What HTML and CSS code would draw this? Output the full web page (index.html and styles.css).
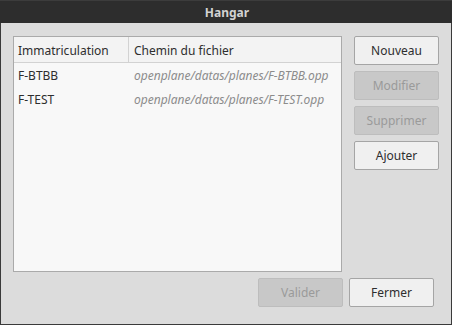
FILE: index.html
```html
<!DOCTYPE html>
<html lang="fr">
<head>
<meta charset="utf-8">
<title>Hangar</title>
<link rel="stylesheet" href="styles.css">
</head>
<body>
<div class="window">
  <div class="titlebar">Hangar</div>
  <div class="content">
    <div class="main">
      <div class="table">
        <div class="thead">
          <div class="th col1">Immatriculation</div>
          <div class="th col2">Chemin du fichier</div>
        </div>
        <div class="row">
          <div class="td col1">F-BTBB</div>
          <div class="td col2 path">openplane/datas/planes/F-BTBB.opp</div>
        </div>
        <div class="row">
          <div class="td col1">F-TEST</div>
          <div class="td col2 path">openplane/datas/planes/F-TEST.opp</div>
        </div>
      </div>
      <div class="side">
        <button class="btn">Nouveau</button>
        <button class="btn" disabled>Modifier</button>
        <button class="btn" disabled>Supprimer</button>
        <button class="btn">Ajouter</button>
      </div>
    </div>
    <div class="footer">
      <button class="btn" disabled>Valider</button>
      <button class="btn">Fermer</button>
    </div>
  </div>
</div>
</body>
</html>
```
FILE: styles.css
```css
* { box-sizing: border-box; }
html, body { margin: 0; padding: 0; }
body {
  font-family: "Noto Sans", "Open Sans", sans-serif;
  font-size: 12px;
  color: #2e2e2e;
  background: #dcdcdc;
}
.window {
  width: 452px;
  height: 325px;
  background: #dcdcdc;
  border: 1px solid #3a3a3a;
  border-top: none;
  display: flex;
  flex-direction: column;
}
.titlebar {
  height: 23px;
  background: #2d2d2d;
  border-top: 1px solid #3c3c3c;
  margin: 0 -1px;
  color: #d2d2d2;
  font-weight: bold;
  font-size: 12px;
  display: flex;
  align-items: center;
  justify-content: center;
  padding-top: 1px;
  padding-left: 2px;
}
.content {
  flex: 1;
  padding: 13px 12px 0 12px;
  display: flex;
  flex-direction: column;
}
.main {
  display: flex;
  gap: 12px;
}
.table {
  width: 329px;
  height: 236px;
  background: #f8f8f8;
  border: 1px solid #aaaaaa;
}
.thead {
  display: flex;
  height: 26px;
  background: #f3f3f3;
  border-bottom: 1px solid #d2d2d2;
}
.th {
  display: flex;
  align-items: center;
  padding-left: 4px;
  padding-top: 1px;
}
.thead .col1 {
  border-right: 1px solid #d2d2d2;
}
.col1 { width: 115px; flex-shrink: 0; }
.col2 { flex: 1; padding-left: 5px; }
.row {
  display: flex;
  height: 24px;
  align-items: center;
}
.td { padding-left: 4px; white-space: nowrap; }
.row .col2 { padding-left: 5px; }
.path {
  font-style: italic;
  color: #8c8c8c;
}
.side {
  display: flex;
  flex-direction: column;
  gap: 6px;
}
.btn {
  width: 85px;
  height: 29px;
  font-family: inherit;
  font-size: 12px;
  color: #2e2e2e;
  background: #f0f0f0;
  border: 1px solid #a5a5a5;
  border-radius: 2px;
  padding: 0;
}
.btn:disabled {
  background: #c8c8c8;
  border-color: #bdbdbd;
  color: #9a9a9a;
}
.footer {
  display: flex;
  justify-content: flex-end;
  gap: 6px;
  margin-top: 6px;
  padding-right: 5px;
}
```
